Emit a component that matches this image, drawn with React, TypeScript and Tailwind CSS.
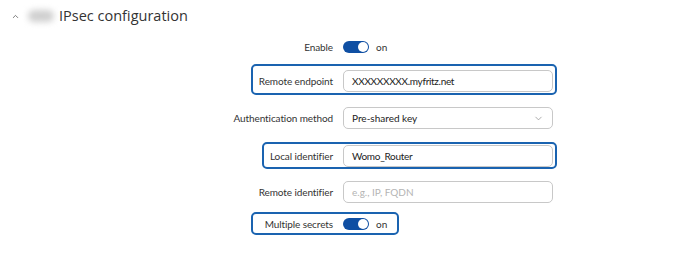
import { ChevronUp, ChevronDown } from "lucide-react";

const form = { fontFamily: 'Lato, "Open Sans", sans-serif' };

const Toggle = () => (
  <div className="flex items-center">
    <div className="flex h-[12px] w-[26px] items-center justify-end rounded-full bg-[#0f4fa3] pr-[1px]">
      <div className="h-[10px] w-[10px] rounded-full bg-white" />
    </div>
    <span className="ml-[7px] text-[10px] text-[#333]">on</span>
  </div>
);

const Label = ({ text }: { text: string }) => (
  <div className="w-[333px] shrink-0 text-right text-[10px] tracking-[-0.1px] text-[#333]">{text}</div>
);

const Input = ({ value, placeholder }: { value?: string; placeholder?: string }) => (
  <div className="ml-[10px] flex h-[22px] w-[210px] items-center rounded-[5px] border border-[#c8c8c8] bg-white px-[8px] text-[10px]">
    {value ? (
      <span className="tracking-[-0.3px] text-[#222]">{value}</span>
    ) : (
      <span className="text-[#b4b4b4]">{placeholder}</span>
    )}
  </div>
);

const App = () => {
  return (
    <div className="h-[253px] w-[690px] overflow-hidden bg-white" style={{ fontFamily: '"Open Sans", "Noto Sans", sans-serif' }}>
      {/* Header */}
      <div className="flex h-[32px] items-center pl-[11px]">
        <ChevronUp className="h-[9px] w-[9px] text-[#555]" strokeWidth={2} />
        <div className="ml-[8px] h-[12px] w-[26px] rounded-full bg-[#cfcfcf] blur-[3px]" />
        <span className="ml-[5px] text-[14.5px] text-[#333]">IPsec configuration</span>
      </div>

      {/* Form */}
      <div className="flex flex-col" style={form}>
        {/* Enable */}
        <div className="mt-[4px] flex h-[22px] items-center">
          <Label text="Enable" />
          <div className="ml-[10px]">
            <Toggle />
          </div>
        </div>

        {/* Remote endpoint */}
        <div className="relative mt-[12px] flex h-[22px] items-center">
          <div className="absolute -top-[6px] -bottom-[3px] left-[251px] w-[306px] rounded-[5px] border-2 border-[#1a63b0]" />
          <Label text="Remote endpoint" />
          <Input value="XXXXXXXXX.myfritz.net" />
        </div>

        {/* Authentication method */}
        <div className="mt-[15px] flex h-[22px] items-center">
          <Label text="Authentication method" />
          <div className="ml-[10px] flex h-[22px] w-[210px] items-center justify-between rounded-[5px] border border-[#c8c8c8] bg-white px-[8px] text-[10px] text-[#222]">
            <span>Pre-shared key</span>
            <ChevronDown className="h-[11px] w-[11px] text-[#888]" strokeWidth={1.5} />
          </div>
        </div>

        {/* Local identifier */}
        <div className="relative mt-[16px] flex h-[22px] items-center">
          <div className="absolute -top-[3px] -bottom-[2px] left-[262px] w-[295px] rounded-[5px] border-2 border-[#1a63b0]" />
          <Label text="Local identifier" />
          <Input value="Womo_Router" />
        </div>

        {/* Remote identifier */}
        <div className="mt-[14px] flex h-[22px] items-center">
          <Label text="Remote identifier" />
          <Input placeholder="e.g., IP, FQDN" />
        </div>

        {/* Multiple secrets */}
        <div className="relative mt-[10px] flex h-[22px] items-center">
          <div className="absolute -top-[1px] -bottom-[0px] left-[251px] w-[148px] rounded-[5px] border-2 border-[#1a63b0]" />
          <Label text="Multiple secrets" />
          <div className="ml-[10px]">
            <Toggle />
          </div>
        </div>
      </div>
    </div>
  );
};

export default App;
